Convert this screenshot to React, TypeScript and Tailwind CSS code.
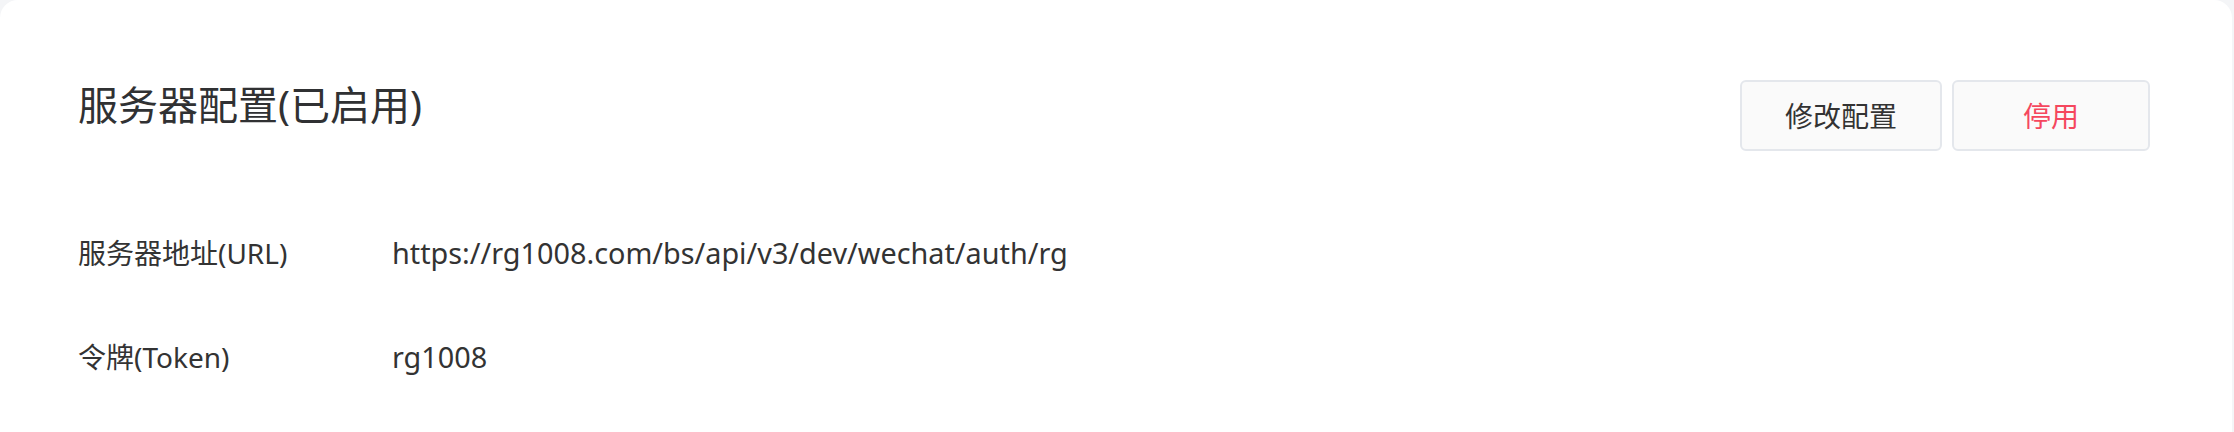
const font = { fontFamily: '"Noto Sans", "Noto Sans CJK SC", sans-serif' }

const rows = [
  { label: "服务器地址(URL)", value: "https://rg1008.com/bs/api/v3/dev/wechat/auth/rg" },
  { label: "令牌(Token)", value: "rg1008" },
]

export default function App() {
  return (
    <div className="h-[432px] w-full overflow-hidden bg-[#f4f5f7] pr-[2px]" style={font}>
      <div className="h-[480px] rounded-[18px] bg-white pl-[78px] pr-[82px] pt-[80px] text-[#333]">
        <div className="flex items-start justify-between">
          <h1 className="text-[40px] leading-[50px] font-normal text-[#303133]">服务器配置(已启用)</h1>
          <div className="flex gap-[10px]">
            <button className="h-[71px] w-[202px] rounded-md border-2 border-[#e4e7ec] bg-[#fafafa] text-[28px] text-[#333]">
              修改配置
            </button>
            <button className="h-[71px] w-[198px] rounded-md border-2 border-[#e4e7ec] bg-[#fafafa] text-[28px] text-[#f5475e]">
              停用
            </button>
          </div>
        </div>
        <div className="mt-[82px] flex flex-col gap-[64px]">
          {rows.map((row) => (
            <div key={row.label} className="flex items-center leading-[40px]">
              <div className="w-[314px] shrink-0 text-[28px]">{row.label}</div>
              <div className="text-[28.8px]">{row.value}</div>
            </div>
          ))}
        </div>
      </div>
    </div>
  )
}
